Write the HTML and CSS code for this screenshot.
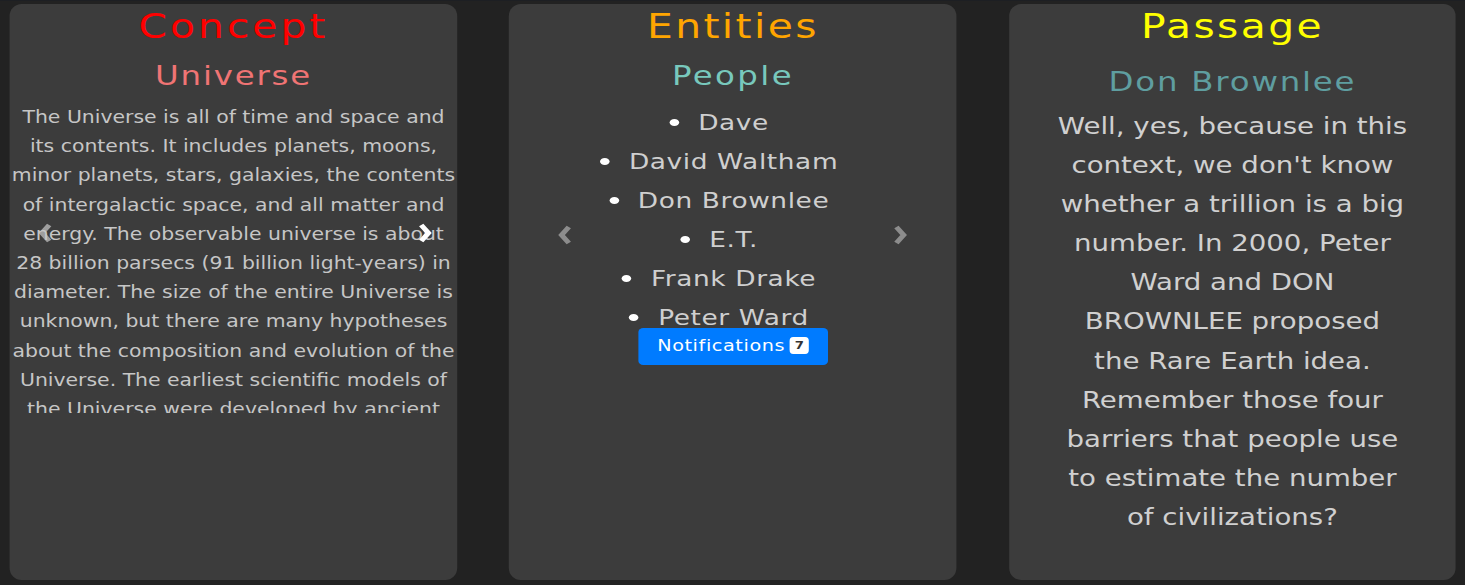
FILE: index.html
```html
<!DOCTYPE html>
<html lang="en">
<head>
<meta charset="utf-8">
<title>Concept / Entities / Passage</title>
<link rel="stylesheet" href="styles.css">
</head>
<body>
<main class="board">
  <section class="card">
    <h1 class="title title-concept">Concept</h1>
    <h2 class="subtitle subtitle-concept">Universe</h2>
    <div class="carousel carousel-concept">
      <p class="concept-text">The Universe is all of time and space and<br>its contents. It includes planets, moons,<br>minor planets, stars, galaxies, the contents<br>of intergalactic space, and all matter and<br>energy. The observable universe is about<br>28 billion parsecs (91 billion light-years) in<br>diameter. The size of the entire Universe is<br>unknown, but there are many hypotheses<br>about the composition and evolution of the<br>Universe. The earliest scientific models of<br>the Universe were developed by ancient<br>Greek and Indian philosophers.</p>
      <span class="arrow arrow-left arrow-dim"><svg viewBox="0 0 13 22" width="13" height="22"><path d="M10 3 L4 11 L10 19" fill="none" stroke="currentColor" stroke-width="4.5"/></svg></span>
      <span class="arrow arrow-right arrow-bright"><svg viewBox="0 0 13 22" width="13" height="22"><path d="M3 3 L9 11 L3 19" fill="none" stroke="currentColor" stroke-width="4.5"/></svg></span>
    </div>
  </section>

  <section class="card">
    <h1 class="title title-entities">Entities</h1>
    <h2 class="subtitle subtitle-people">People</h2>
    <div class="carousel carousel-entities">
      <ul class="people">
        <li>Dave</li>
        <li>David Waltham</li>
        <li>Don Brownlee</li>
        <li>E.T.</li>
        <li>Frank Drake</li>
        <li>Peter Ward</li>
      </ul>
      <button class="notify" type="button">Notifications<span class="badge">7</span></button>
      <span class="arrow arrow-left arrow-gray"><svg viewBox="0 0 13 22" width="13" height="22"><path d="M10 3 L4 11 L10 19" fill="none" stroke="currentColor" stroke-width="4.5"/></svg></span>
      <span class="arrow arrow-right arrow-gray"><svg viewBox="0 0 13 22" width="13" height="22"><path d="M3 3 L9 11 L3 19" fill="none" stroke="currentColor" stroke-width="4.5"/></svg></span>
    </div>
  </section>

  <section class="card">
    <h1 class="title title-passage">Passage</h1>
    <h2 class="subtitle subtitle-speaker">Don Brownlee</h2>
    <p class="passage-text">Well, yes, because in this<br>context, we don't know<br>whether a trillion is a big<br>number. In 2000, Peter<br>Ward and DON<br>BROWNLEE proposed<br>the Rare Earth idea.<br>Remember those four<br>barriers that people use<br>to estimate the number<br>of civilizations?</p>
  </section>
</main>
</body>
</html>
```

FILE: styles.css
```css
* { box-sizing: border-box; }

html, body {
  margin: 0;
  padding: 0;
  background: #222222;
}

body {
  font-family: "DejaVu Sans", "Open Sans", sans-serif;
  color: #cfcfcf;
  height: 585px;
  overflow: hidden;
}

/* The whole board is drawn horizontally stretched, as in the reference. */
.board {
  width: 1221px;
  height: 585px;
  transform: scaleX(1.2);
  transform-origin: 0 0;
  display: grid;
  grid-template-columns: 372.5px 373.3px 372.5px;
  column-gap: 43.33px;
  padding: 3px 0 6px 8.33px;
  border-top: 1px solid #1d1f23;
}

.card {
  background: #3c3c3c;
  border-radius: 10px / 12px;
  display: flex;
  flex-direction: column;
  align-items: center;
  text-align: center;
  height: 576px;
  min-width: 0;
}

.title {
  margin: 0;
  font-weight: 400;
  font-size: 34px;
  line-height: 42px;
  letter-spacing: 2px;
  margin-top: 1px;
}

.title-concept { color: #ff0000; letter-spacing: 2.5px; }
.title-entities { color: #ffa500; }
.title-passage { color: #ffff00; }

.subtitle {
  margin: 0;
  font-weight: 400;
  font-size: 27px;
  line-height: 36px;
  letter-spacing: 1.5px;
  margin-top: 11px;
}

.subtitle-concept { color: #f07474; }
.subtitle-people { color: #78c8bc; letter-spacing: 2px; }
.subtitle-speaker { color: #5f9ea0; margin-top: 17px; }

.carousel {
  position: relative;
  width: 100%;
}

.carousel-concept {
  margin-top: 9px;
  height: 310px;
  overflow: hidden;
}

.concept-text {
  margin: 0;
  font-size: 17px;
  line-height: 29.2px;
  color: #c6c6c6;
  white-space: nowrap;
}

.carousel-entities {
  display: flex;
  flex-direction: column;
  align-items: center;
  margin-top: 9px;
  height: 270px;
}

.people {
  list-style: none;
  margin: 0;
  padding: 0 23px 0 0;
  font-size: 22px;
  line-height: 39px;
  letter-spacing: 0.5px;
  color: #cfcfcf;
}

.people li::before {
  content: "";
  display: inline-block;
  width: 8px;
  height: 7px;
  border-radius: 50%;
  background: #ffffff;
  vertical-align: middle;
  margin: -3px 16px 0 0;
}

.notify {
  margin-top: -9px;
  width: 158px;
  height: 37px;
  border: none;
  border-radius: 4px / 4px;
  background: #007bff;
  color: #ffffff;
  font-family: "DejaVu Sans", "Open Sans", sans-serif;
  font-size: 16px;
  letter-spacing: 0.5px;
  display: flex;
  align-items: center;
  justify-content: center;
  gap: 4px;
  padding: 0 0 2px 0;
}

.badge {
  background: #ffffff;
  color: #333333;
  border-radius: 3px / 4px;
  font-size: 11px;
  font-weight: 700;
  line-height: 15px;
  letter-spacing: 0;
  padding: 1px 4px;
}

.arrow {
  position: absolute;
  width: 13px;
  height: 22px;
  display: flex;
}

.arrow-dim { color: rgba(200, 200, 200, 0.7); }
.arrow-bright { color: #ffffff; }
.arrow-gray { color: #8c8c8c; }

.carousel-concept .arrow { top: 119px; }
.carousel-entities .arrow { top: 121px; }
.carousel-concept .arrow-left { left: 22.5px; }
.carousel-concept .arrow-right { right: 20px; }
.carousel-entities .arrow-left { left: 40px; }
.carousel-entities .arrow-right { right: 40px; }

.passage-text {
  margin: 7px 0 0 0;
  font-size: 23px;
  line-height: 39.1px;
  color: #d0d0d0;
  white-space: nowrap;
}
```
